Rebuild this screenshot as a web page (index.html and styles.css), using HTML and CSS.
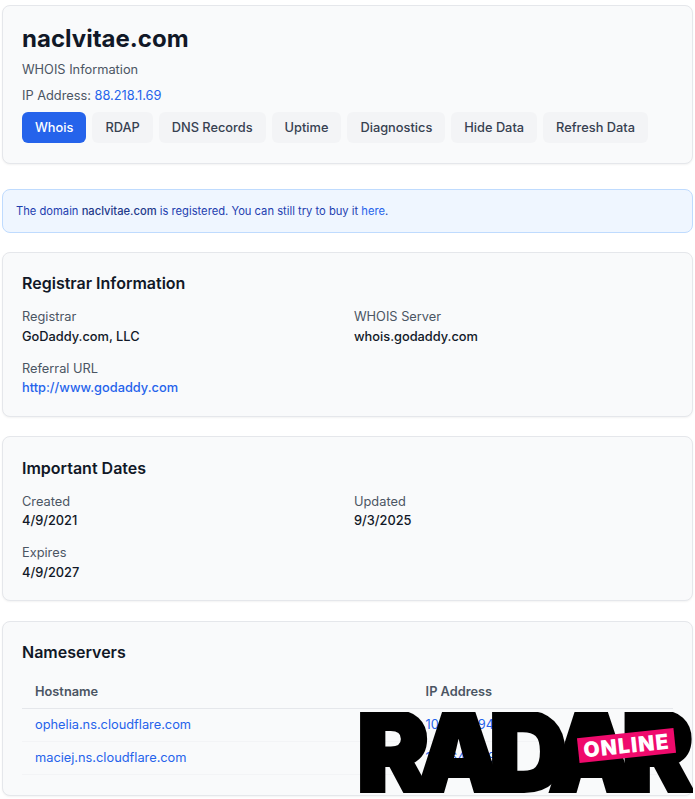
FILE: index.html
```html
<!DOCTYPE html>
<html lang="en">
<head>
<meta charset="utf-8">
<title>naclvitae.com WHOIS</title>
<link rel="stylesheet" href="styles.css">
</head>
<body>
<main class="page">
  <section class="card header">
    <h1>naclvitae.com</h1>
    <p class="sub">WHOIS Information</p>
    <p class="ip">IP Address: <a href="#">88.218.1.69</a></p>
    <nav class="tabs">
      <a class="tab active" href="#">Whois</a>
      <a class="tab" href="#">RDAP</a>
      <a class="tab" href="#">DNS Records</a>
      <a class="tab" href="#">Uptime</a>
      <a class="tab" href="#">Diagnostics</a>
      <a class="tab" href="#">Hide Data</a>
      <a class="tab" href="#">Refresh Data</a>
    </nav>
  </section>
  <div class="alert">The domain <strong>naclvitae.com</strong> is registered. You can still try to buy it <a href="#">here</a>.</div>
  <section class="card">
    <h2>Registrar Information</h2>
    <div class="fields">
      <div><div class="label">Registrar</div><div class="value">GoDaddy.com, LLC</div></div>
      <div><div class="label">WHOIS Server</div><div class="value">whois.godaddy.com</div></div>
      <div><div class="label">Referral URL</div><div class="value"><a href="#">http://www.godaddy.com</a></div></div>
    </div>
  </section>
  <section class="card dates">
    <h2>Important Dates</h2>
    <div class="fields">
      <div><div class="label">Created</div><div class="value">4/9/2021</div></div>
      <div><div class="label">Updated</div><div class="value">9/3/2025</div></div>
      <div><div class="label">Expires</div><div class="value">4/9/2027</div></div>
    </div>
  </section>
  <section class="card ns">
    <h2>Nameservers</h2>
    <table>
      <thead><tr><th class="host">Hostname</th><th>IP Address</th></tr></thead>
      <tbody>
        <tr><td><a href="#">ophelia.ns.cloudflare.com</a></td><td><a href="#">108.162.194.170</a></td></tr>
        <tr><td><a href="#">maciej.ns.cloudflare.com</a></td><td><a href="#">172.64.34.94</a></td></tr>
      </tbody>
    </table>
  </section>
</main>
<div class="logo" aria-label="Radar Online">
  <span class="logo-word">RADAR</span>
  <span class="logo-tag">ONLINE</span>
</div>
</body>
</html>
```
FILE: styles.css
```css
* { box-sizing: border-box; }
html, body { margin: 0; padding: 0; background: #fff; }
body {
  font-family: Inter, "Noto Sans", sans-serif;
  color: #111827;
  font-size: 12.8px;
  overflow: hidden;
  height: 799px;
  position: relative;
}
a { color: #2563eb; text-decoration: none; }
p { margin: 0; }
.page { padding: 5px 2px 0; display: flex; flex-direction: column; width: 695px; }
.card {
  background: #f9fafb;
  border: 1px solid #e5e7eb;
  border-radius: 8px;
  box-shadow: 0 1px 2px rgba(0,0,0,.05);
  padding: 19px;
  margin-bottom: 19.49px;
  flex: none;
}
.header { height: 159px; margin-bottom: 25px; }
.dates { padding-top: 19.5px; padding-bottom: 18.5px; }
h1 { font-size: 24px; line-height: 28px; font-weight: 700; margin: 0 0 9px; color: #111827; }
.sub, .ip { font-size: 12.8px; line-height: 16px; color: #4b5563; }
.sub { margin-bottom: 10px; }
.ip { margin-bottom: 8px; }
.tabs { display: flex; gap: 6px; }
.tab {
  font-size: 12.8px; line-height: 16px; font-weight: 500; color: #374151;
  background: #f3f4f6; border-radius: 6px; padding: 7.5px 13px;
}
.tab.active { background: #2563eb; color: #fff; }
.alert {
  height: 44px; margin-bottom: 19px; flex: none;
  background: #eff6ff; border: 1px solid #bfdbfe; border-radius: 8px;
  color: #1e40af; font-size: 11.2px; line-height: 16px; padding: 13px;
}
.alert strong { font-weight: 500; color: #1e3a8a; }
h2 { font-size: 16px; line-height: 22px; font-weight: 600; margin: 0 0 14px; color: #111827; }
.fields { display: grid; grid-template-columns: 1fr 1fr; column-gap: 13px; row-gap: 14px; }
.label { font-size: 12.8px; line-height: 18px; color: #4b5563; }
.value { font-size: 12.8px; line-height: 18px; font-weight: 500; color: #111827; margin-top: 1.5px; }
.ns { height: 175px; margin-bottom: 0; }
table { width: 100%; border-collapse: collapse; table-layout: fixed; margin-top: -2px; }
th { text-align: left; font-size: 12.8px; font-weight: 600; color: #4b5563; padding: 9px 13px 8px; line-height: 16px; border-bottom: 1px solid #e5e7eb; }
th.host { width: 60%; }
td { font-size: 12.8px; line-height: 16px; padding: 8px 13px; border-bottom: 1px solid #f3f4f6; }
.logo {
  position: absolute; left: 360px; top: 712px; width: 333px; height: 81px;
  overflow: hidden;
}
.logo-word {
  position: absolute; left: -3px; top: -20px;
  font-family: Inter, sans-serif; font-weight: 900; font-size: 108px; line-height: 120px;
  letter-spacing: -13px; color: #000; -webkit-text-stroke: 4px #000; white-space: nowrap;
}
.logo-tag {
  position: absolute; left: 217.5px; top: 20.5px; width: 97px; height: 25px;
  background: #ef0a6c; color: #fff; font-weight: 900; font-size: 21px; line-height: 25px;
  text-align: center; transform: rotate(-6deg); letter-spacing: 1.2px; white-space: nowrap;
}
```
